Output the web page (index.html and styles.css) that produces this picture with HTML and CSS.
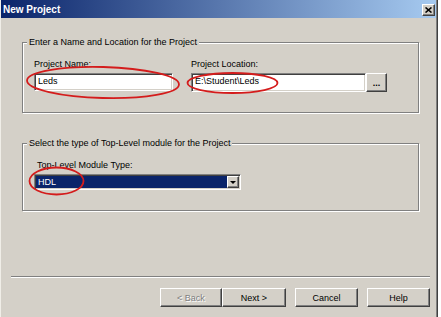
FILE: index.html
```html
<!DOCTYPE html>
<html lang="en">
<head>
  <meta charset="UTF-8">
  <meta name="viewport" content="width=device-width, initial-scale=1.0">
  <title>New Project</title>
  <link rel="stylesheet" href="styles.css">
</head>
<body>
  <div class="window">
    <div class="titlebar">
      <span class="title">New Project</span>
      <button class="close-btn">
        <svg width="7" height="6" viewBox="0 0 7 6">
          <path d="M0.5 0.5 L6.5 5.5 M6.5 0.5 L0.5 5.5" stroke="#000" stroke-width="1.6" fill="none"/>
        </svg>
      </button>
    </div>

    <div class="panel">
      <fieldset class="group">
        <legend>Enter a Name and Location for the Project</legend>
        <div class="fields">
          <div class="field name-field">
            <label>Project Name:</label>
            <div class="textbox">Leds</div>
          </div>
          <div class="field location-field">
            <label>Project Location:</label>
            <div class="browse-row">
              <div class="textbox">E:\Student\Leds</div>
              <button class="btn browse-btn">...</button>
            </div>
          </div>
        </div>
      </fieldset>

      <fieldset class="group group-type">
        <legend>Select the type of Top-Level module for the Project</legend>
        <label class="combo-label">Top-Level Module Type:</label>
        <div class="combo">
          <span class="combo-value">HDL</span>
          <span class="combo-arrow"><span class="arrow"></span></span>
        </div>
      </fieldset>

      <div class="separator"></div>

      <div class="buttons">
        <button class="btn wizard-btn back-btn" disabled>&lt; Back</button>
        <button class="btn wizard-btn next-btn">Next &gt;</button>
        <button class="btn wizard-btn cancel-btn">Cancel</button>
        <button class="btn wizard-btn help-btn">Help</button>
      </div>
    </div>

    <!-- red hand-drawn marks over the screenshot -->
    <svg class="marks" width="437" height="317" viewBox="0 0 437 317">
      <ellipse cx="102" cy="82.5" rx="76" ry="15.5" transform="rotate(1.5 102 82.5)"/>
      <ellipse cx="231.5" cy="83" rx="45" ry="10"/>
      <ellipse cx="55.5" cy="181" rx="27" ry="13.5"/>
    </svg>
  </div>
</body>
</html>
```

FILE: styles.css
```css
body {
  margin: 0;
  background: #fff;
  font-family: "Liberation Sans", Arial, sans-serif;
  font-size: 9px;
  color: #000;
}

.window {
  position: relative;
  box-sizing: border-box;
  width: 437px;
  height: 317px;
  background: #d4d0c8;
  border-left: 1px solid #f0eee8;
  border-right: 1px solid #808080;
  box-shadow: 1px 0 0 #404040;
}

.titlebar {
  display: flex;
  align-items: center;
  justify-content: space-between;
  height: 18px;
  padding: 0 1px 0 2px;
  background: linear-gradient(to right, #0a246a, #a6caf0);
}

.title {
  color: #fff;
  font-weight: bold;
  font-size: 10px;
}

.close-btn {
  display: flex;
  align-items: center;
  justify-content: center;
  box-sizing: border-box;
  width: 13px;
  height: 12px;
  margin-top: 1px;
  padding: 0;
  background: #d4d0c8;
  border: 1px solid;
  border-color: #fff #404040 #404040 #fff;
  box-shadow: inset -1px -1px 0 #808080;
}

.panel {
  padding: 18px 0 0 10px;
}

.group {
  box-sizing: border-box;
  width: 397px;
  margin: 0 0 0 11px;
  padding: 0 0 20px 0;
  border: 1px solid #808080;
  box-shadow: inset 1px 1px 0 #fff, 1px 1px 0 #fff;
}

.group legend {
  margin-left: 4px;
  padding: 0 2px;
  line-height: 12px;
  background: #d4d0c8;
}

.group-type {
  margin-top: 24px;
}

.fields {
  display: flex;
  gap: 18px;
  padding: 10px 0 0 11px;
}

.field label {
  display: block;
  line-height: 12px;
  margin-bottom: 3px;
}

.name-field {
  width: 139px;
}

.textbox {
  box-sizing: border-box;
  height: 18px;
  padding: 0 3px;
  line-height: 14px;
  background: #fff;
  border: 1px solid;
  border-color: #808080 #fff #fff #808080;
  box-shadow: inset 1px 1px 0 #404040, inset -1px -1px 0 #d4d0c8;
  white-space: nowrap;
}

.browse-row {
  display: flex;
}

.browse-row .textbox {
  width: 175px;
  height: 19px;
  line-height: 15px;
}

.btn {
  box-sizing: border-box;
  padding: 0;
  font-family: "Liberation Sans", Arial, sans-serif;
  font-size: 9px;
  color: #000;
  background: #d4d0c8;
  border: 1px solid;
  border-color: #fff #404040 #404040 #fff;
  box-shadow: inset -1px -1px 0 #808080;
}

.browse-btn {
  width: 21px;
  height: 19px;
  font-weight: bold;
  line-height: 12px;
}

.combo-label {
  display: block;
  padding: 10px 0 0 14px;
  line-height: 12px;
}

.combo {
  display: flex;
  box-sizing: border-box;
  width: 207px;
  height: 16px;
  margin: 3px 0 0 11px;
  padding: 1px;
  background: #fff;
  border: 1px solid;
  border-color: #808080 #fff #fff #808080;
  box-shadow: inset 1px 1px 0 #404040, inset -1px -1px 0 #d4d0c8;
}

.combo-value {
  flex: 1;
  padding-left: 2px;
  line-height: 12px;
  color: #fff;
  background: #0a246a;
}

.combo-arrow {
  display: flex;
  align-items: center;
  justify-content: center;
  box-sizing: border-box;
  width: 12px;
  background: #d4d0c8;
  border: 1px solid;
  border-color: #fff #404040 #404040 #fff;
  box-shadow: inset -1px -1px 0 #808080;
}

.arrow {
  width: 0;
  height: 0;
  border-left: 3px solid transparent;
  border-right: 3px solid transparent;
  border-top: 3px solid #000;
}

.separator {
  width: 419px;
  margin-top: 65px;
  border-top: 1px solid #808080;
  border-bottom: 1px solid #fff;
}

.buttons {
  display: flex;
  justify-content: flex-end;
  margin: 10px 6px 0 0;
}

.wizard-btn {
  width: 63px;
  height: 19px;
}

.back-btn {
  width: 62px;
  color: #808080;
  text-shadow: 1px 1px 0 #fff;
}

.next-btn {
  width: 64px;
}

.cancel-btn,
.help-btn {
  margin-left: 9px;
}

.marks {
  position: absolute;
  top: 0;
  left: 0;
  pointer-events: none;
}

.marks ellipse {
  fill: none;
  stroke: #d41c1c;
  stroke-width: 1.8;
}
```
